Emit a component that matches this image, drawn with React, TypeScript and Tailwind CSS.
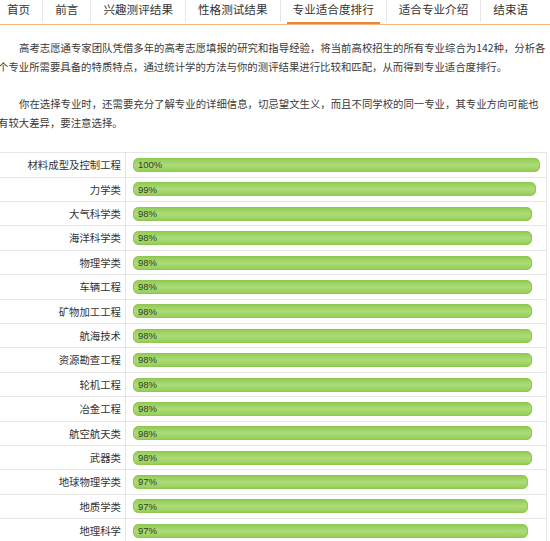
import React from "react";

const tabs = ["首页", "前言", "兴趣测评结果", "性格测试结果", "专业适合度排行", "适合专业介绍", "结束语"];
const activeTab = "专业适合度排行";

interface MajorRow {
  name: string;
  pct: number;
}

const majors: MajorRow[] = [
  { name: "材料成型及控制工程", pct: 100 },
  { name: "力学类", pct: 99 },
  { name: "大气科学类", pct: 98 },
  { name: "海洋科学类", pct: 98 },
  { name: "物理学类", pct: 98 },
  { name: "车辆工程", pct: 98 },
  { name: "矿物加工工程", pct: 98 },
  { name: "航海技术", pct: 98 },
  { name: "资源勘查工程", pct: 98 },
  { name: "轮机工程", pct: 98 },
  { name: "冶金工程", pct: 98 },
  { name: "航空航天类", pct: 98 },
  { name: "武器类", pct: 98 },
  { name: "地球物理学类", pct: 97 },
  { name: "地质学类", pct: 97 },
  { name: "地理科学", pct: 97 },
  { name: "地理信息科学", pct: 97 },
];

const FULL_BAR = 407;

const Tabs: React.FC = () => {
  return (
    <div className="flex h-[25px] -ml-[5px] border-b border-[#f5b685] whitespace-nowrap">
      {tabs.map((tab, i) => (
        <div key={tab} className="flex shrink-0">
          {i > 0 && <div className="w-px h-[22px] bg-[#e6e6e6]" />}
          <div className="relative px-3 text-[11.6px] leading-[18px] text-[#333]">
            {tab}
            {tab === activeTab && (
              <div className="absolute left-[6px] right-[6px] bottom-0 h-[2px] bg-[#f0842e]" />
            )}
          </div>
        </div>
      ))}
    </div>
  );
};

const App: React.FC = () => {
  return (
    <div
      className="w-[550px] h-[541px] overflow-hidden bg-white text-[#333]"
      style={{ fontFamily: '"Noto Sans CJK SC", "Noto Sans", sans-serif' }}
    >
      <Tabs />

      <div className="mt-[14px] -ml-[2px] text-[10.4px] leading-[18.7px] text-[#3a3a3a]">
        <div className="whitespace-nowrap pl-[21px]">
          高考志愿通专家团队凭借多年的高考志愿填报的研究和指导经验，将当前高校招生的所有专业综合为142种，分析各
        </div>
        <div className="whitespace-nowrap">
          个专业所需要具备的特质特点，通过统计学的方法与你的测评结果进行比较和匹配，从而得到专业适合度排行。
        </div>
        <div className="whitespace-nowrap pl-[21px] mt-[18.5px]">
          你在选择专业时，还需要充分了解专业的详细信息，切忌望文生义，而且不同学校的同一专业，其专业方向可能也
        </div>
        <div className="whitespace-nowrap">有较大差异，要注意选择。</div>
      </div>

      <div className="mt-[20px] w-[547px] border-r border-[#e6e6e6]">
        {majors.map((m) => (
          <div key={m.name} className="flex h-[24.4px] border-t border-[#e6e6e6]">
            <div className="w-[126px] shrink-0 border-r border-[#e6e6e6] pr-[4px] flex items-center justify-end text-[10.4px] text-[#333] whitespace-nowrap">
              {m.name}
            </div>
            <div className="flex-1 flex items-center pl-[7px]">
              <div
                className="h-[14px] rounded-[5px] border border-[#8fc752] bg-gradient-to-b from-[#93cc55] via-[#addc78] to-[#96ce58] flex items-center pl-[4px]"
                style={{ width: (FULL_BAR * m.pct) / 100 }}
              >
                <span
                  className="text-[9.5px] leading-none text-[#2f3a22]"
                  style={{ fontFamily: '"Liberation Sans", sans-serif' }}
                >
                  {m.pct}%
                </span>
              </div>
            </div>
          </div>
        ))}
      </div>
    </div>
  );
};

export default App;
